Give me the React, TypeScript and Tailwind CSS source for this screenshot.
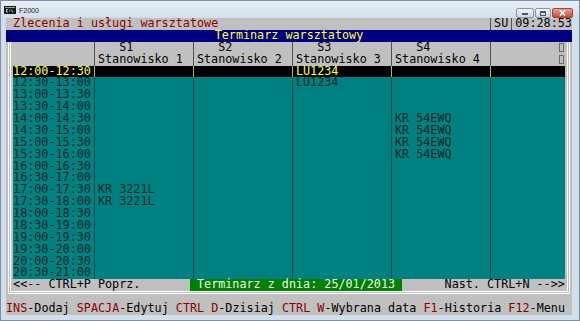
import React from "react";

const times = [
  "12:00-12:30", "12:30-13:00", "13:00-13:30", "13:30-14:00", "14:00-14:30",
  "14:30-15:00", "15:00-15:30", "15:30-16:00", "16:00-16:30", "16:30-17:00",
  "17:00-17:30", "17:30-18:00", "18:00-18:30", "18:30-19:00", "19:00-19:30",
  "19:30-20:00", "20:00-20:30", "20:30-21:00",
];

// slot -> [S1, S2, S3, S4]
const bookings: Record<string, string[]> = {
  "12:00-12:30": ["", "", "LU1234", ""],
  "12:30-13:00": ["", "", "LU1234", ""],
  "14:00-14:30": ["", "", "", "KR 54EWQ"],
  "14:30-15:00": ["", "", "", "KR 54EWQ"],
  "15:00-15:30": ["", "", "", "KR 54EWQ"],
  "15:30-16:00": ["", "", "", "KR 54EWQ"],
  "17:00-17:30": ["KR 3221L", "", "", ""],
  "17:30-18:00": ["KR 3221L", "", "", ""],
};

function Edge() {
  return (
    <div className="w-[1ch] h-full bg-[#c0c0c0] flex">
      <div className="ml-[2px] w-px h-full bg-white" />
      <div className="ml-px w-px h-full bg-white" />
    </div>
  );
}

function Sep({ cls }: { cls: string }) {
  return (
    <div className="w-[1ch] h-full flex justify-center">
      <div className={`w-px h-full ${cls}`} />
    </div>
  );
}

function Columns({ first, cells, extra, sep }: { first: React.ReactNode; cells: React.ReactNode[]; extra?: React.ReactNode; sep: string }) {
  return (
    <>
      <div className="w-[11ch]">{first}</div>
      {cells.map((c, i) => (
        <React.Fragment key={i}>
          <Sep cls={sep} />
          <div className="w-[13ch]">{c}</div>
        </React.Fragment>
      ))}
      <Sep cls={sep} />
      <div className="w-[10ch] flex justify-end">{extra}</div>
    </>
  );
}

function MissingGlyph() {
  return (
    <div className="w-[1ch] flex items-center justify-center">
      <div className="w-[5px] h-[9px] border border-[#6a6a6a]" />
    </div>
  );
}

function SlotRow({ time, selected }: { time: string; selected: boolean }) {
  const cells = bookings[time] ?? ["", "", "", ""];
  const body = selected ? "bg-black text-[#ffff40]" : "bg-[#008080] text-[#0a2828]";
  const sep = selected ? "bg-[#b8b840]" : "bg-[#0a4646]";
  return (
    <div className="flex h-[11.875px]">
      <Edge />
      <div className={`flex h-full ${body}`}>
        <Columns first={time} cells={cells} sep={sep} />
      </div>
      <Edge />
    </div>
  );
}

function TitleButtons() {
  return (
    <div className="flex items-start gap-px mt-[7px] mr-[6px]">
      <div className="w-[18px] h-[10px] rounded-[2px] border border-[#8797ab] bg-gradient-to-b from-[#f2f5f9] to-[#cbd6e4] flex items-end justify-center pb-[2px]">
        <div className="w-[6px] h-[2px] bg-[#4a5a70]" />
      </div>
      <div className="w-[16px] h-[10px] rounded-[2px] border border-[#8797ab] bg-gradient-to-b from-[#f2f5f9] to-[#cbd6e4] flex items-center justify-center">
        <div className="w-[6px] h-[5px] border border-[#4a5a70] border-t-2" />
      </div>
      <div className="w-[21px] h-[10px] rounded-[2px] border border-[#9a4a40] bg-gradient-to-b from-[#e8a093] to-[#c9453a] flex items-center justify-center">
        <svg width="7" height="6" viewBox="0 0 7 6">
          <path d="M1 0.5 L6 5.5 M6 0.5 L1 5.5" stroke="white" strokeWidth="1.6" />
        </svg>
      </div>
    </div>
  );
}

export default function App() {
  const font = { fontFamily: '"DejaVu Sans Mono", "Liberation Mono", monospace' };
  return (
    <div className="w-[580px] h-[321px] bg-[#d3deeb] border border-[#7f90a6] flex flex-col overflow-hidden">
      {/* title bar */}
      <div className="h-[17px] flex justify-between bg-gradient-to-b from-[#e6edf5] to-[#d3deeb]">
        <div className="flex items-center gap-[3px] pl-[3px] pt-[1px]">
          <svg width="12" height="8" viewBox="0 0 12 8">
            <rect x="0" y="0" width="12" height="8" fill="#1a1a1a" />
            <rect x="1" y="1" width="10" height="1" fill="#9aa4b0" />
            <path d="M2.5 3.5 h1.5 M2.5 3.5 v2.5 M2.5 6 h1.5 M5.5 4 v0.5 M5.5 5.5 v0.5 M7 3.5 L9 6.5" stroke="#e8e8e8" strokeWidth="0.8" />
          </svg>
          <span className="text-[7px] leading-none text-[#1e1e1e]" style={{ fontFamily: '"Liberation Sans", Arial, sans-serif' }}>
            F2000
          </span>
        </div>
        <TitleButtons />
      </div>

      {/* console */}
      <div className="ml-[5px] w-[80ch] text-[11.75px] leading-[11.875px] whitespace-pre text-black bg-[#c0c0c0]" style={font}>
        {/* row 0 */}
        <div className="flex h-[11.875px]">
          <div className="w-[68ch] pl-[1ch] text-[#8a0000]">Zlecenia i usługi warsztatowe</div>
          <Sep cls="bg-[#505050]" />
          <div className="w-[2ch]">SU</div>
          <Sep cls="bg-[#505050]" />
          <div className="w-[8ch]">09:28:53</div>
        </div>

        {/* row 1 */}
        <div className="h-[11.875px] bg-[#000080] text-[#ffff40] text-center">Terminarz warsztatowy</div>

        {/* header rows */}
        <div className="flex h-[11.875px]">
          <Edge />
          <Columns first="" cells={["   S1", "   S2", "   S3", "   S4"]} extra={<MissingGlyph />} sep="bg-[#505050]" />
          <Edge />
        </div>
        <div className="flex h-[11.875px]">
          <Edge />
          <Columns
            first=""
            cells={["Stanowisko 1", "Stanowisko 2", "Stanowisko 3", "Stanowisko 4"]}
            extra={<MissingGlyph />}
            sep="bg-[#505050]"
          />
          <Edge />
        </div>

        {times.map((t, i) => (
          <SlotRow key={t} time={t} selected={i === 0} />
        ))}

        {/* navigation row */}
        <div className="flex h-[11.875px]">
          <Edge />
          <div className="w-[25ch]">{"<<-- CTRL+P Poprz."}</div>
          <div className="w-[30ch] bg-[#008000] text-[#f0f8f0]">{" Terminarz z dnia: 25/01/2013 "}</div>
          <div className="w-[23ch] text-right">{"Nast. CTRL+N -->>"}</div>
          <Edge />
        </div>

        {/* bottom frame */}
        <div className="h-[11.875px] px-[2px]">
          <div className="h-[3px] border-x border-b border-white">
            <div className="mx-px h-px bg-white" />
          </div>
        </div>

        {/* help row */}
        <div className="h-[11.875px]">
          <span className="text-[#8a0000]">INS</span>-Dodaj <span className="text-[#8a0000]">SPACJA</span>-Edytuj{" "}
          <span className="text-[#8a0000]">CTRL D</span>-Dzisiaj <span className="text-[#8a0000]">CTRL W</span>-Wybrana data{" "}
          <span className="text-[#8a0000]">F1</span>-Historia <span className="text-[#8a0000]">F12</span>-Menu
        </div>
      </div>
    </div>
  );
}
